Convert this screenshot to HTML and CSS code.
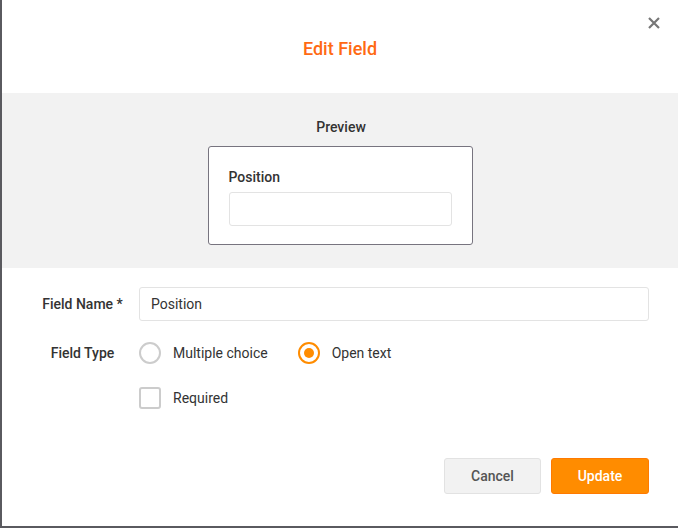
FILE: index.html
```html
<!DOCTYPE html>
<html lang="en">
<head>
  <meta charset="UTF-8">
  <title>Edit Field</title>
  <link rel="stylesheet" href="styles.css">
</head>
<body>
  <div class="modal">
    <div class="modal-head">
      <h2>Edit Field</h2>
      <button class="close" aria-label="Close">
        <svg width="12" height="12" viewBox="0 0 12 12"><path d="M1 1L11 11M11 1L1 11" stroke="#777" stroke-width="2.2"/></svg>
      </button>
    </div>
    <div class="preview">
      <div class="preview-title">Preview</div>
      <div class="preview-box">
        <div class="preview-label">Position</div>
        <div class="preview-input"></div>
      </div>
    </div>
    <div class="form">
      <label class="label">Field Name *</label>
      <input class="text" type="text" value="Position">
      <div class="label">Field Type</div>
      <div class="options">
        <span class="opt"><span class="radio"></span>Multiple choice</span>
        <span class="opt"><span class="radio checked"></span>Open text</span>
      </div>
      <div></div>
      <div class="options required">
        <span class="opt"><span class="check"></span>Required</span>
      </div>
    </div>
    <div class="actions">
      <button class="btn cancel">Cancel</button>
      <button class="btn update">Update</button>
    </div>
  </div>
</body>
</html>
```

FILE: styles.css
```css
html, body { margin: 0; padding: 0; }
body { background: #5a5a5f; font-family: Roboto, "Liberation Sans", sans-serif; color: #333; height: 528px; overflow: hidden; }
.modal { margin-left: 2px; height: 526px; background: #fff; }
.modal-head { position: relative; height: 93px; display: flex; align-items: center; justify-content: center; }
.modal-head h2 { margin: 3px 0 0 0; font-size: 18px; font-weight: 500; color: #ff6a13; }
.close { position: absolute; top: 17px; right: 17px; border: 0; background: none; padding: 0; width: 14px; height: 14px; cursor: pointer; }
.preview { background: #f2f2f2; height: 175px; display: flex; flex-direction: column; align-items: center; padding-top: 26px; box-sizing: border-box; }
.preview-title { font-size: 14px; font-weight: 500; color: #333; margin-bottom: 11px; margin-left: 2px; }
.preview-box { width: 265px; height: 99px; box-sizing: border-box; background: #fff; border: 1px solid #77747f; border-radius: 3px; padding: 22px 20px 0 20px; }
.preview-label { font-size: 14px; font-weight: 500; color: #333; margin-bottom: 7px; }
.preview-input { height: 34px; border: 1px solid #e3e3e3; border-radius: 3px; box-sizing: border-box; }
.form { display: grid; grid-template-columns: 113px 1fr; padding: 19px 29px 0 24px; row-gap: 18px; align-items: center; }
.label { font-size: 14px; font-weight: 500; color: #333; text-align: center; }
.text { height: 34px; box-sizing: border-box; border: 1px solid #e3e3e3; border-radius: 3px; padding: 0 11px; font: 14px Roboto, "Liberation Sans", sans-serif; color: #333; outline: none; }
.options { display: flex; align-items: center; height: 28px; }
.options.required { margin-top: -1px; }
.opt { display: flex; align-items: center; font-size: 14px; color: #333; margin-right: 30px; }
.radio { width: 22px; height: 22px; box-sizing: border-box; border: 2px solid #ccc; border-radius: 50%; margin-right: 12px; display: flex; align-items: center; justify-content: center; }
.radio.checked { border-color: #ff8c00; }
.radio.checked::after { content: ""; width: 10px; height: 10px; border-radius: 50%; background: #ff8c00; }
.check { width: 22px; height: 22px; box-sizing: border-box; border: 2px solid #ccc; border-radius: 3px; margin-right: 12px; }
.actions { display: flex; justify-content: flex-end; gap: 10px; padding: 46px 29px 0 0; }
.btn { width: 97px; height: 36px; border-radius: 3px; font: 500 14px Roboto, "Liberation Sans", sans-serif; cursor: pointer; }
.cancel { background: #f2f2f2; border: 1px solid #e2e2e2; color: #555; }
.update { width: 98px; background: #ff8c00; border: 1px solid #ff7a00; color: #fff; }
```
